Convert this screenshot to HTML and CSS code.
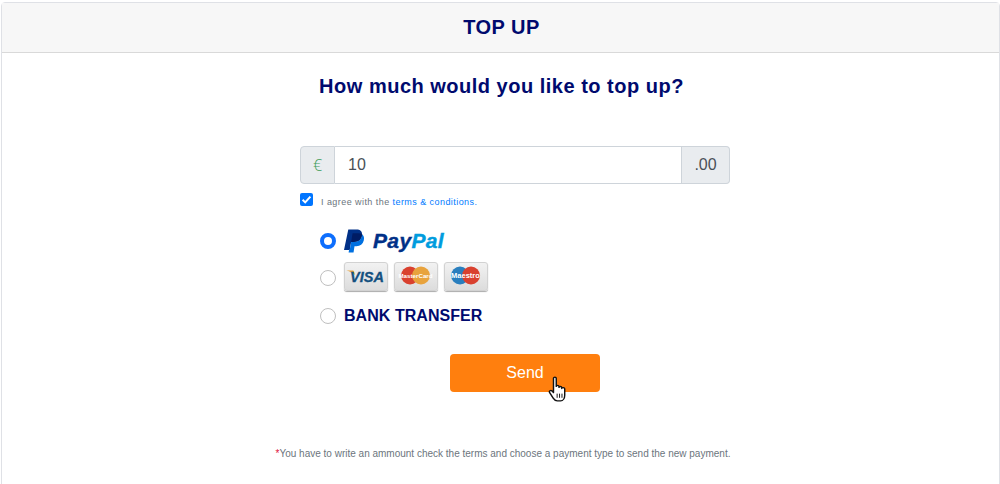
FILE: index.html
```html
<!DOCTYPE html>
<html lang="en">
<head>
<meta charset="utf-8">
<title>Top up</title>
<link rel="stylesheet" href="styles.css">
</head>
<body>
<main class="card">
  <header class="card-header"><h1 class="title">TOP UP</h1></header>
  <section class="card-body">
    <h2 class="question">How much would you like to top up?</h2>
    <div class="form">
      <div class="amount">
        <span class="addon addon-left">€</span>
        <span class="amount-value">10</span>
        <span class="addon addon-right">.00</span>
      </div>
      <label class="terms">
        <svg class="checkbox" width="13" height="13" viewBox="0 0 13 13"><rect width="13" height="13" rx="2" fill="#0075ff"/><path d="M2.6 6.800 5.200 9.400 10.400 3.600" fill="none" stroke="#fff" stroke-width="2"/></svg>
        <span class="terms-text">I agree with the <span class="link">terms &amp; conditions.</span></span>
      </label>
      <div class="methods">
        <div class="method method-paypal">
          <span class="radio radio-on"></span>
          <svg class="pp-mark" width="21" height="24" viewBox="0 0 22 24"><path d="M4.500 0H13c4 0 6.500 2 5.800 6-.8 5-4.300 7-8.800 7H7.500L6 21.500H0Z" fill="#003087"/><path d="M19.500 5.500C21 7 21.300 9 20.700 11.500 19.700 15.500 17 17.500 13 17.500H11L10 24H4.800L5.300 21.500H6L7.500 13H10c4.500 0 8-2 8.800-7Z" fill="#0070e0"/><path d="M7.500 13H10c4.500 0 8-2 8.800-7l.7-.5c-.5-.6-2-1.500-4-1.500H9Z" fill="#001c64"/></svg>
          <span class="pp-word"><span class="pp-pay">Pay</span><span class="pp-pal">Pal</span></span>
        </div>
        <div class="method method-cards">
          <span class="radio"></span>
          <span class="pay-card">
            <svg width="44" height="29" viewBox="0 0 44 29"><path d="M2.500 8.500H8.500c1 0 1.500.5 1.700 1.500L11 13C9 11 6 9.500 2.500 8.500Z" fill="#e8a33d"/><text x="23" y="20" class="visa-text" text-anchor="middle">VISA</text></svg>
          </span>
          <span class="pay-card">
            <svg width="44" height="29" viewBox="0 0 44 29"><circle cx="16" cy="13.500" r="9" fill="#d9412f"/><circle cx="27" cy="13.500" r="9" fill="#e8a33d"/><text x="21.500" y="15.500" class="card-text card-text-mc" text-anchor="middle">MasterCard</text></svg>
          </span>
          <span class="pay-card">
            <svg width="44" height="29" viewBox="0 0 44 29"><circle cx="16" cy="13.500" r="9" fill="#2a7fbe"/><circle cx="27" cy="13.500" r="9" fill="#d9412f"/><text x="21.500" y="16" class="card-text" text-anchor="middle">Maestro</text></svg>
          </span>
        </div>
        <div class="method method-bank">
          <span class="radio"></span>
          <span class="bank">BANK TRANSFER</span>
        </div>
      </div>
      <div class="send-row">
        <button class="send" type="button">Send</button>
        <svg class="cursor" width="22" height="27" viewBox="0 0 20 26" preserveAspectRatio="none"><path d="M5 2.200C5 .8 7.500.8 7.500 2.200V10c0-1.300 2.500-1.300 2.500 0v1c0-1.200 2.500-1.200 2.500 0v1c0-1.200 2.700-1.200 2.700.2v6.300c0 3-1.600 5.500-3.700 5.500H8.500c-1.800 0-2.800-1-3.800-2.700L1.500 16c-.9-1.500 1-2.800 2.200-1.500L5 16Z" fill="#fff" stroke="#111" stroke-width="1.300" stroke-linejoin="round"/><path d="M8.300 17v4M10.500 17v4M12.700 17v4" stroke="#111" stroke-width=".9"/></svg>
      </div>
      <p class="note"><span class="star">*</span>You have to write an ammount check the terms and choose a payment type to send the new payment.</p>
    </div>
  </section>
</main>
</body>
</html>
```
FILE: styles.css
```css
* { box-sizing: border-box; }
html, body { height: 100%; }
body {
  margin: 0;
  overflow: hidden;
  background: #fff;
  font-family: "Liberation Sans", Arial, sans-serif;
  padding: 2px 0 0 1px;
}
.card {
  height: 500px;
  border: 1px solid #dfe1e6;
  border-radius: 4px;
  background: #fff;
}
.card-header {
  height: 50px;
  background: #f7f7f7;
  border-bottom: 1px solid #d9d9d9;
  display: flex;
  align-items: center;
  justify-content: center;
}
.title {
  margin: 0;
  font-size: 20px;
  font-weight: 700;
  letter-spacing: .5px;
  color: #000a6e;
  position: relative;
  left: 1px;
}
.card-body { display: flex; flex-direction: column; align-items: center; }
.question {
  margin: 21px 0 0;
  font-size: 20px;
  line-height: 24px;
  font-weight: 700;
  letter-spacing: .5px;
  color: #000a6e;
  position: relative;
  left: 1px;
}
.form { width: 430px; margin-top: 48px; align-self: flex-start; margin-left: 298px; }
.amount {
  display: flex;
  height: 38px;
  font-size: 16px;
  color: #495057;
}
.addon {
  display: flex;
  align-items: center;
  justify-content: center;
  background: #e9ecef;
  border: 1px solid #ced4da;
}
.addon-left {
  width: 35px;
  border-radius: 4px 0 0 4px;
  color: #3f9c5a;
  font-family: "Open Sans", sans-serif;
  font-weight: 300;
}
.addon-right {
  width: 48px;
  border-left: 0;
  border-radius: 0 4px 4px 0;
}
.amount-value {
  flex: 1;
  display: flex;
  align-items: center;
  padding-left: 13px;
  border: 1px solid #ced4da;
  border-left: 0;
}
.terms { display: flex; margin-top: 9px; height: 17px; }
.checkbox { flex: none; }
.terms-text {
  margin: 3px 0 0 8px;
  font-size: 9px;
  line-height: 12px;
  letter-spacing: .44px;
  color: #6c757d;
}
.link { color: #007bff; }
.methods { margin: 15px 0 0 20px; }
.method { display: flex; align-items: center; }
.method-paypal { height: 32px; }
.method-cards { height: 37px; margin-top: 2px; }
.method-bank { height: 32px; margin-top: 4px; }
.radio {
  flex: none;
  width: 16px;
  height: 16px;
  margin-right: 8px;
  border: 1px solid #bfbfbf;
  border-radius: 50%;
  background: #fff;
}
.radio-on { border: 4px solid #0d6efd; }
.pp-mark { margin-right: 8px; }
.pp-word {
  font-size: 21px;
  font-weight: 700;
  font-style: italic;
  letter-spacing: .35px;
  -webkit-text-stroke: .4px currentColor;
}
.pp-pay { color: #003087; }
.pp-pal { color: #009cde; }
.pay-card {
  width: 44px;
  height: 29px;
  margin: 0 6px 3px 0;
  border-radius: 3px;
  border: 1px solid #d2d2d2;
  background: linear-gradient(#f2f2f2, #dcdcdc);
  box-shadow: 0 1px 1px #aaa;
  overflow: hidden;
}
.pay-card svg { display: block; margin: -1px; }
.visa-text {
  font: italic 700 14.500px "Liberation Sans", Arial, sans-serif;
  fill: #14507f;
  stroke: #14507f;
  stroke-width: .3px;
}
.card-text {
  font: 700 7.500px "Liberation Sans", Arial, sans-serif;
  fill: #fff;
}
.card-text-mc { font-size: 6.200px; }
.bank {
  font-size: 16px;
  font-weight: 700;
  letter-spacing: .05px;
  color: #000a6e;
}
.send-row {
  position: relative;
  display: flex;
  justify-content: center;
  padding-left: 20px;
  margin-top: 22px;
}
.send {
  width: 150px;
  height: 38px;
  border: 0;
  border-radius: 4px;
  background: #ff7f0e;
  color: #fff;
  font: 16px "Liberation Sans", Arial, sans-serif;
}
.cursor { position: absolute; left: 248px; top: 22px; }
.note {
  margin: 55px 0 0 -37px;
  width: 480px;
  text-align: center;
  font-size: 10px;
  line-height: 13px;
  color: #6c757d;
  white-space: nowrap;
}
.star { color: #e0103a; }
```
